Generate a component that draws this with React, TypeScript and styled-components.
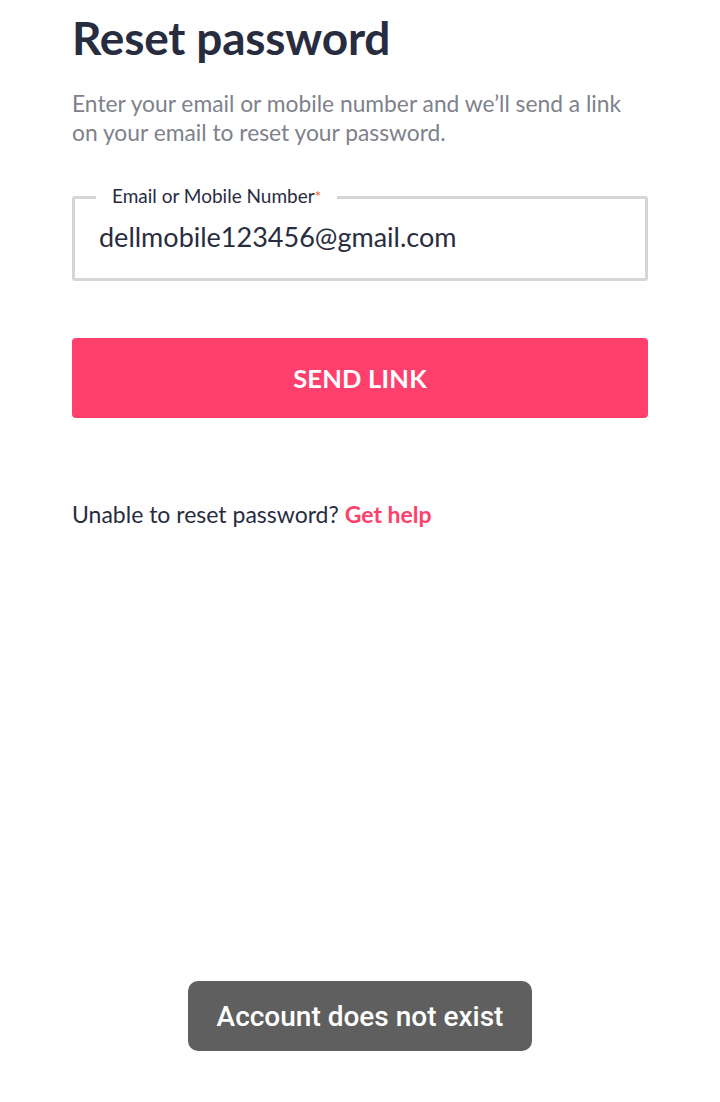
import React from "react";
import styled, { createGlobalStyle } from "styled-components";

const GlobalStyle = createGlobalStyle`
  html, body {
    margin: 0;
    padding: 0;
    background: #ffffff;
  }
  body {
    font-family: Lato, "Open Sans", sans-serif;
    color: #282c3f;
  }
`;

const Page = styled.main`
  position: relative;
  width: 720px;
  height: 1102px;
  box-sizing: border-box;
  padding: 8px 72px 0;
  overflow: hidden;
`;

const Title = styled.h1`
  margin: 0;
  font-size: 46px;
  line-height: 60px;
  font-weight: 700;
  color: #282c3f;
  letter-spacing: -0.2px;
`;

const Description = styled.p`
  margin: 21px 0 0;
  font-size: 22.8px;
  line-height: 29px;
  color: #7e818c;
  font-weight: 400;
`;

const Field = styled.div`
  position: relative;
  margin-top: 49px;
  height: 85px;
  box-sizing: border-box;
  padding: 0 24px;
  border: 3px solid #d4d5d9;
  border-radius: 3px;
  display: flex;
  align-items: center;
`;

const Label = styled.label`
  position: absolute;
  left: 21px;
  top: -15px;
  padding: 0 16px;
  background: #ffffff;
  font-size: 19px;
  line-height: 24px;
  color: #282c3f;
`;

const Required = styled.span`
  color: #ff5722;
  font-size: 15px;
  vertical-align: top;
`;

const Input = styled.input`
  width: 100%;
  border: none;
  outline: none;
  padding: 0;
  margin-top: -4px;
  font-family: Lato, "Open Sans", sans-serif;
  font-size: 27px;
  color: #282c3f;
  background: transparent;
`;

const SendButton = styled.button`
  display: block;
  width: 100%;
  height: 80px;
  margin-top: 57px;
  border: none;
  border-radius: 4px;
  background: #ff3f6c;
  color: #ffffff;
  font-family: Lato, "Open Sans", sans-serif;
  font-size: 25.5px;
  font-weight: 700;
  letter-spacing: 0.2px;
`;

const HelpLine = styled.p`
  margin: 81px 0 0;
  font-size: 23px;
  line-height: 30px;
  color: #282c3f;
`;

const HelpLink = styled.a`
  color: #ff3f6c;
  font-weight: 700;
  text-decoration: none;
`;

const Toast = styled.div`
  position: absolute;
  left: 188px;
  top: 981px;
  width: 344px;
  height: 70px;
  border-radius: 10px;
  background: #5f5f5f;
  color: #ffffff;
  font-family: Roboto, sans-serif;
  font-size: 28px;
  font-weight: 500;
  display: flex;
  align-items: center;
  justify-content: center;
`;

export default function App() {
  return (
    <>
      <GlobalStyle />
      <Page>
        <Title>Reset password</Title>
        <Description>
          Enter your email or mobile number and we’ll send a link on your email
          to reset your password.
        </Description>
        <Field>
          <Label>
            Email or Mobile Number<Required>*</Required>
          </Label>
          <Input defaultValue="dellmobile123456@gmail.com" />
        </Field>
        <SendButton>SEND LINK</SendButton>
        <HelpLine>
          Unable to reset password? <HelpLink href="#">Get help</HelpLink>
        </HelpLine>
        <Toast>Account does not exist</Toast>
      </Page>
    </>
  );
}
